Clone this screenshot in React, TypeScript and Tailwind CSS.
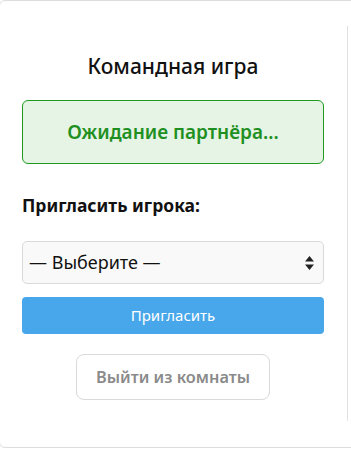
import React from "react";

export default function App() {
  return (
    <div className="w-[351px] h-[449px] overflow-hidden bg-white" style={{ fontFamily: '"Noto Sans", "Open Sans", sans-serif' }}>
      <div className="ml-[-1px] w-[360px] h-[448px] border border-[#dcdcdc] rounded-[6px] bg-white">
        <div className="mt-[25px] w-[348px] border-r border-[#e2e2e2] pl-[22px] pr-[23px] pt-[26px] pb-[21px] flex flex-col">
          <h2 className="text-[21px] leading-[28px] text-center text-[#111] font-medium">Командная игра</h2>
          <div className="mt-[20px] h-[64px] rounded-[6px] border border-[#1f9a1f] bg-[#e6f4e6] flex items-center justify-center">
            <span className="text-[19px] font-semibold text-[#1f901f]">Ожидание партнёра...</span>
          </div>
          <div className="mt-[29px] text-[17.5px] leading-[24px] font-bold text-[#111]">Пригласить игрока:</div>
          <div className="relative mt-[24px] h-[43px] rounded-[5px] border border-[#d9d9d9] bg-[#f9f9f9] flex items-center px-[6px]">
            <span className="text-[18px] text-[#111]">— Выберите —</span>
            <svg className="absolute right-[9px] top-[14px]" width="9" height="14" viewBox="0 0 9 14">
              <path d="M4.5 0 L9 5.5 L0 5.5 Z" fill="#222" />
              <path d="M4.5 14 L9 8.5 L0 8.5 Z" fill="#222" />
            </svg>
          </div>
          <button className="mt-[13px] h-[37px] rounded-[4px] bg-[#47a7ea] text-white text-[15px]">Пригласить</button>
          <div className="mt-[20px] flex justify-center">
            <button className="h-[46px] w-[194px] rounded-[8px] border border-[#d9d9d9] bg-white text-[#8a8a8a] text-[16.3px] font-semibold">Выйти из комнаты</button>
          </div>
        </div>
      </div>
    </div>
  );
}
